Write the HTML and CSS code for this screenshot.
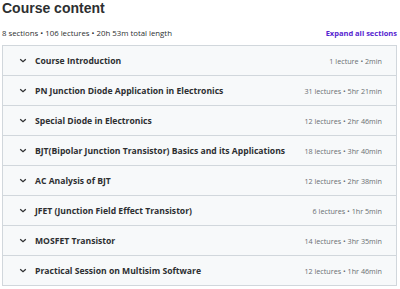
FILE: index.html
```html
<!DOCTYPE html>
<html lang="en">
<head>
    <meta charset="UTF-8">
    <meta name="viewport" content="width=device-width, initial-scale=1.0">
    <title>Course content</title>
    <link rel="stylesheet" href="styles.css">
</head>
<body>
    <div class="curriculum">
        <h2 class="title">Course content</h2>
        <div class="summary">
            <span class="stats">8 sections • 106 lectures • 20h 53m total length</span>
            <a class="expand-all">Expand all sections</a>
        </div>

        <div class="sections">
            <div class="section">
                <span class="chevron"><svg viewBox="0 0 10 6"><path d="M1.5 1.5 L5 4.5 L8.5 1.5"/></svg></span>
                <span class="section-title">Course Introduction</span>
                <span class="section-meta">1 lecture • 2min</span>
            </div>
            <div class="section">
                <span class="chevron"><svg viewBox="0 0 10 6"><path d="M1.5 1.5 L5 4.5 L8.5 1.5"/></svg></span>
                <span class="section-title">PN Junction Diode Application in Electronics</span>
                <span class="section-meta">31 lectures • 5hr 21min</span>
            </div>
            <div class="section">
                <span class="chevron"><svg viewBox="0 0 10 6"><path d="M1.5 1.5 L5 4.5 L8.5 1.5"/></svg></span>
                <span class="section-title">Special Diode in Electronics</span>
                <span class="section-meta">12 lectures • 2hr 46min</span>
            </div>
            <div class="section">
                <span class="chevron"><svg viewBox="0 0 10 6"><path d="M1.5 1.5 L5 4.5 L8.5 1.5"/></svg></span>
                <span class="section-title">BJT(Bipolar Junction Transistor) Basics and its Applications</span>
                <span class="section-meta">18 lectures • 3hr 40min</span>
            </div>
            <div class="section">
                <span class="chevron"><svg viewBox="0 0 10 6"><path d="M1.5 1.5 L5 4.5 L8.5 1.5"/></svg></span>
                <span class="section-title">AC Analysis of BJT</span>
                <span class="section-meta">12 lectures • 2hr 38min</span>
            </div>
            <div class="section">
                <span class="chevron"><svg viewBox="0 0 10 6"><path d="M1.5 1.5 L5 4.5 L8.5 1.5"/></svg></span>
                <span class="section-title">JFET (Junction Field Effect Transistor)</span>
                <span class="section-meta">6 lectures • 1hr 5min</span>
            </div>
            <div class="section">
                <span class="chevron"><svg viewBox="0 0 10 6"><path d="M1.5 1.5 L5 4.5 L8.5 1.5"/></svg></span>
                <span class="section-title">MOSFET Transistor</span>
                <span class="section-meta">14 lectures • 3hr 35min</span>
            </div>
            <div class="section">
                <span class="chevron"><svg viewBox="0 0 10 6"><path d="M1.5 1.5 L5 4.5 L8.5 1.5"/></svg></span>
                <span class="section-title">Practical Session on Multisim Software</span>
                <span class="section-meta">12 lectures • 1hr 46min</span>
            </div>
        </div>
    </div>
</body>
</html>
```

FILE: styles.css
```css
* {
    margin: 0;
    padding: 0;
    box-sizing: border-box;
    font-family: "Open Sans", "Noto Sans", sans-serif;
}

body {
    background-color: #fff;
    color: #2d2f31;
}

.curriculum {
    padding: 0 3px 0 2px;
}

.title {
    font-family: "Liberation Sans", Arial, sans-serif;
    font-size: 14px;
    font-weight: 700;
    line-height: 16px;
}

/* Summary line */
.summary {
    display: flex;
    justify-content: space-between;
    align-items: center;
    margin-top: 11px;
    height: 12px;
}

.stats {
    font-size: 7.8px;
    color: #2d2f31;
}

.expand-all {
    font-size: 7.5px;
    font-weight: 700;
    color: #5624d0;
    cursor: pointer;
}

/* Sections */
.sections {
    margin-top: 6px;
    border: 1px solid #d1d7dc;
    border-bottom: none;
}

.section {
    display: flex;
    align-items: center;
    height: 30px;
    padding: 0 14px 0 16px;
    background-color: #f7f9fa;
    border-bottom: 1px solid #d1d7dc;
}

.chevron {
    width: 8px;
    display: flex;
    align-items: center;
}

.chevron svg {
    width: 8px;
    height: 5px;
    fill: none;
    stroke: #2d2f31;
    stroke-width: 1.6;
}

.section-title {
    flex: 1;
    margin-left: 8px;
    font-size: 8.6px;
    font-weight: 700;
    white-space: nowrap;
}

.section-meta {
    font-size: 7.2px;
    color: #6a6f73;
    white-space: nowrap;
}
```
